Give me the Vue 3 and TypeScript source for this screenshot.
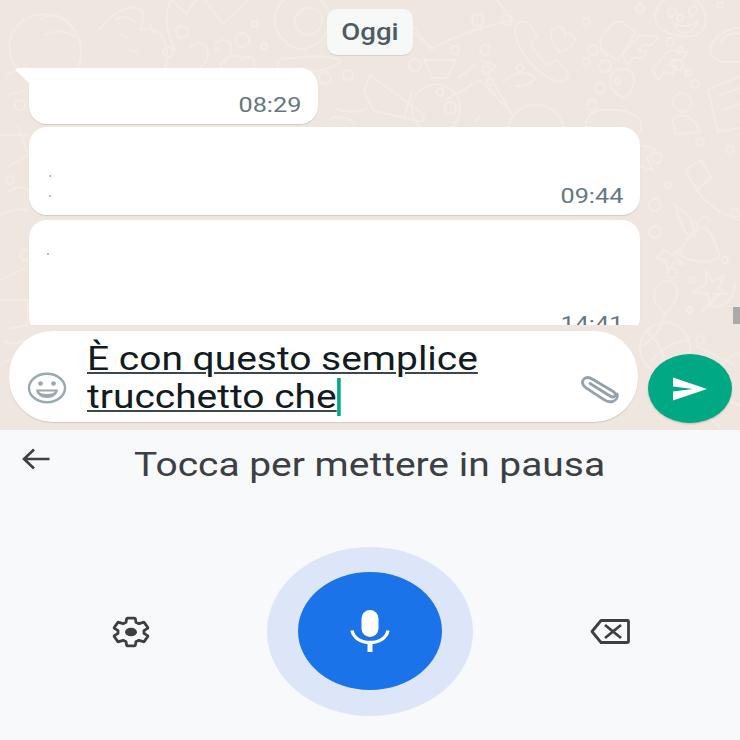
<template>
  <div class="phone">
    <section class="chat">
      <!-- wallpaper doodles -->
      <svg class="doodles" width="740" height="430" viewBox="0 0 740 430" fill="none">
        <circle v-for="(c, i) in dots" :key="i" :cx="c[0]" :cy="c[1]" :r="c[2]" />
        <path v-for="(d, i) in shapes" :key="'s' + i" :d="d" />
      </svg>

      <div class="messages">
        <div class="date-chip"><span class="wide">Oggi</span></div>
        <div class="bubble first">
          <span class="tail"></span>
          <span class="time">08:29</span>
        </div>
        <div class="bubble second">
          <i class="speck speck-a"></i>
          <i class="speck speck-b"></i>
          <span class="time">09:44</span>
        </div>
        <div class="bubble third">
          <i class="speck speck-c"></i>
          <span class="time">14:41</span>
        </div>
      </div>
      <div class="scroll-thumb"></div>

      <div class="composer">
        <div class="input-pill">
          <svg class="emoji" width="40" height="32" viewBox="0 0 40 32" fill="none">
            <ellipse cx="20" cy="16" rx="18" ry="14.2" stroke="#9aa8af" stroke-width="2.4" />
            <ellipse cx="13.5" cy="11.5" rx="2.4" ry="2.2" fill="#9aa8af" />
            <ellipse cx="26.5" cy="11.5" rx="2.4" ry="2.2" fill="#9aa8af" />
            <path d="M9 17.5h22c-.6 5.5-5 8.5-11 8.5S9.600 23 9 17.500z" fill="#9aa8af" />
            <path d="M12 19.500h16c-1 1.800-4 2.500-8 2.500s-7-.7-8-2.500z" fill="#fff" />
          </svg>
          <div class="draft">
            <span class="line">È con questo semplice</span>
            <span class="line"><span class="word">trucchetto che</span><i class="caret"></i></span>
          </div>
          <svg class="clip" width="40" height="30" viewBox="0 0 40 30" fill="none">
            <path d="M10 8.500 30 21c2 1.300 4 1.300 5-.2 1-1.500-.2-3.300-2.200-4.500L13 4.500C9 2 5.500 2 3.500 4.500 1.500 7 2.500 10.500 6 12.800l17.500 11.500c3 2 6.500 3 9.500 2 3.500-1.300 5-4.500 4-7.300" stroke="#93a1a9" stroke-width="2.800" stroke-linecap="round" stroke-linejoin="round" />
          </svg>
        </div>
        <button class="send">
          <svg width="36" height="26" viewBox="0 0 36 26"><path d="M1 1.500 35 13 1 24.500V15.500L21 13 1 10.500z" fill="#fff" /></svg>
        </button>
      </div>
    </section>

    <section class="keyboard">
      <div class="voice-header">
        <svg class="back" width="30" height="24" viewBox="0 0 30 24" fill="none">
          <path d="M28.500 12H3M13 2.500 3 12l10 9.500" stroke="#3c4043" stroke-width="2.600" />
        </svg>
        <span class="hint">Tocca per mettere in pausa</span>
      </div>
      <div class="voice-controls">
        <svg class="gear" width="38" height="32" viewBox="1.500 1 21 22" preserveAspectRatio="none" fill="none">
          <path d="M19.140 12.940c.04-.3.06-.61.06-.94 0-.32-.02-.64-.07-.94l2.030-1.580c.18-.14.23-.41.12-.61l-1.920-3.320c-.12-.22-.37-.29-.59-.22l-2.390.96c-.5-.38-1.030-.7-1.620-.94l-.36-2.540c-.04-.24-.24-.41-.48-.41h-3.840c-.24 0-.43.17-.47.41l-.36 2.540c-.59.24-1.130.57-1.620.94l-2.390-.96c-.22-.08-.47 0-.59.22L2.740 8.870c-.12.21-.08.47.12.61l2.030 1.580c-.05.3-.09.63-.09.94s.02.64.07.94l-2.030 1.580c-.18.14-.23.41-.12.61l1.920 3.320c.12.22.37.29.59.22l2.390-.96c.5.38 1.030.7 1.620.94l.36 2.540c.05.24.24.41.48.41h3.840c.24 0 .44-.17.47-.41l.36-2.540c.59-.24 1.130-.56 1.620-.94l2.390.96c.22.08.47 0 .59-.22l1.920-3.320c.12-.22.07-.47-.12-.61l-2.010-1.580z" stroke="#3c4043" stroke-width="2.800" stroke-linejoin="round" vector-effect="non-scaling-stroke" />
          <ellipse cx="12" cy="12" rx="3.300" ry="3" fill="#3c4043" />
        </svg>
        <div class="halo">
          <div class="mic-button">
            <svg width="40" height="44" viewBox="0 0 40 44" fill="none">
              <rect x="11.500" y="1" width="17" height="27" rx="8.500" fill="#fff" />
              <path d="M2 21.500c1.500 7.500 9 12 18 12s16.500-4.500 18-12" stroke="#fff" stroke-width="3.400" />
              <path d="M20 33v10" stroke="#fff" stroke-width="5" />
            </svg>
          </div>
        </div>
        <svg class="backspace" width="40" height="25" viewBox="0 0 40 25" fill="none">
          <path d="M11 1.500h26.500a1 1 0 0 1 1 1v20a1 1 0 0 1-1 1H11L2 12.500z" stroke="#3c4043" stroke-width="2.800" stroke-linejoin="round" />
          <path d="M15 6l16 13M31 6 15 19" stroke="#3c4043" stroke-width="2.800" />
        </svg>
      </div>
    </section>
  </div>
</template>

<script setup lang="ts">
// [x, y, r] of the little wallpaper circles
const dots: number[][] = [
  [182, 32, 6], [217, 50, 2], [242, 40, 7], [255, 24, 3], [264, 46, 3], [168, 52, 5],
  [507, 20, 5], [478, 20, 6], [485, 50, 5], [455, 50, 4], [486, 70, 4], [520, 68, 4],
  [490, 82, 3], [415, 65, 6], [450, 108, 6], [440, 92, 4], [593, 50, 5], [586, 22, 4],
  [586, 62, 4], [605, 66, 6], [618, 81, 3], [640, 8, 4], [680, 18, 3], [720, 5, 3],
  [670, 42, 4], [680, 50, 3], [678, 65, 5], [688, 73, 3], [695, 84, 4], [600, 88, 5],
  [592, 105, 5], [618, 143, 4], [657, 158, 5], [655, 205, 6], [700, 142, 4], [730, 150, 4],
  [668, 185, 3], [655, 232, 6], [700, 340, 4], [672, 273, 5], [693, 280, 3], [690, 310, 3],
  [325, 78, 6], [348, 75, 5], [20, 105, 5], [10, 180, 4], [25, 255, 5], [695, 225, 3],
  [735, 213, 4], [725, 260, 3]
]

const shapes: string[] = [
  // faces and blobs on the left
  'M10 40c5-25 40-35 60-15 20 20 10 55-10 60-25 5-55-15-50-45z',
  'M100 30c15-25 55-35 40 0 30-10 35 40 15 50-20 12-60 15-65-10',
  'M40 20c10-8 25-5 30 5M45 35c10-5 22-5 30 2',
  'M115 20c8-5 15-4 20 3M120 35l8 3M130 50l8 3M150 25l5 10',
  'M170 0c-5 15-5 30 5 50',
  // speech mark and heart
  'M190 48c8-8 20-4 18 8-2 8-8 14-14 14M215 45c6-8 16-6 16 4 0 8-6 14-12 15',
  'M222 62c8-8 18-8 20-2 5-6 14-3 12 6-2 7-10 13-18 15-8-4-18-12-14-19z',
  // top centre pencil box and plane
  'M172 0l14 14 10-14M205 0l18 24 25-24',
  'M280 60c25-5 50-5 60 0 3 6-30 15-55 12-8-1-10-8-5-12z',
  'M280 4c10-12 30-15 45 0 12 20 0 40-20 45-20 2-40-25-25-45z',
  'M300 12c8-8 22-4 22 8s-14 20-22 12-6-15 0-20z',
  'M430 50c25-15 60-25 82-30l-15-20M432 48l-25-20M400 10l30 38',
  // phone, heart
  'M530 25c-10-10-20 0-12 18 8 18 22 32 38 38 10 2 15-5 10-12l-10-9-7 5c-8-5-14-12-18-22l6-7z',
  'M552 30c5-6 14-2 13 5 6-4 12 2 9 8-4 6-10 8-15 9-4-6-11-14-7-22z',
  // film and letters
  'M600 40c6-12 15-20 22-18l14 10-18 28-16-8z',
  'M622 55l18-20 18 2-6 8-10 0-3 5 8 2-5 7-8-2-6 8z',
  'M652 70l18-20 18 2-6 8-10 0-3 5 8 2-5 7-8-2-6 8z',
  // heart-eyes emoji and donut
  'M655 15a25 25 0 1 1 50 10c-5 15-20 12-30 10-12-3-20-8-20-20z',
  'M668 10c3-4 9-2 8 2-1 3-4 5-6 5-2-2-3-4-2-7zM690 8c4-3 9 0 7 4l-6 5c-2-3-3-6-1-9zM675 24c8 3 16 2 22-2-2 8-8 12-13 11-4 0-8-4-9-9z',
  'M710 50c2-15 25-25 30-22M710 50c0 8 10 14 30 12M720 42c5-8 15-10 20-8',
  // plane left of bike, pencil
  'M424 60l32 0-10 18-14 0z',
  'M370 75l52 38c4 4 2 10-3 8l-45-10-10-20z M412 92l-8 25',
  // bicycle
  'M412 108a24 24 0 1 1 0 1z M508 132a28 28 0 1 1 0 1z',
  'M480 60l16 6-8 8 24 40M458 78l18-14M445 100l35-20 34 36M475 122l6-8M503 82c10-10 25-12 32-4-3 6-12 8-20 8',
  // people
  'M610 78a12 12 0 1 1 24 5c-2 8-4 12-10 14-8-2-14-8-14-19zM588 118c5-12 35-10 48-2 8 6 6 18-2 22l-40-2c-8-6-10-12-6-18z',
  'M673 102a9 9 0 1 1 18 0c0 6-4 10-9 10-5-1-9-5-9-10zM672 118c8-5 18-3 24 6l4 8-24 2z',
  // document
  'M708 90c10-6 25-10 32-14M708 90l10 42 22-4M718 96l22-8M722 110l18-6',
  // star and rocket lower right
  'M640 145l15 4-8 9 6 12-14-4-8 8 0-14-12-6 13-5z',
  'M685 170l16-10 10 18-14 12z M697 190c10 15 25 25 43 30M680 220l-5-15 15 12 5 20-10-5z',
  // bell, stars, pin, basketball
  'M680 255c5-15 12-25 25-28 10 10 12 22 15 30-12 6-28 6-40-2zM700 222a5 5 0 1 1 10 0',
  'M664 250l8 5 10-8-6 10 8 8-10-3-6 10-2-12-10-2z',
  'M706 270l6 12 12-6-6 12 10 6-14 0-3 14-3-14-14-2 12-8z',
  'M655 290c8-14 20-10 22 0 2 8-6 18-12 24-6-6-14-14-10-24z',
  'M640 350a25 25 0 1 0 50-4 25 25 0 1 0-50 4zM645 330c10 8 20 22 22 42M665 315c-4 15-15 28-25 32M690 340c-14 0-30 10-40 22',
  'M695 345l40 20M700 380l38-28M722 292l-20 20M735 282c0 20-15 30-28 22',
  'M695 400c10-4 30-4 45 6M660 418c25-10 50-5 60 10',
  // left margin bits
  'M8 95l18-5M0 135l28 0M18 125l10 30-20 12',
  'M0 280l26-12M0 300l28 0 0 25-20 4M0 365c8-8 20-8 26 0M4 340c6 5 14 5 20 0',
  'M0 215c10-5 25-8 28-3M6 75l20-8 6 18M8 192c8-6 16-6 22 0',
  'M330 120c5-6 20-4 25 5M335 108c10 5 25 5 32 0'
]
</script>

<style scoped>
.phone {
  width: 740px;
  height: 740px;
  overflow: hidden;
  display: flex;
  flex-direction: column;
  font-family: Roboto, "Noto Sans", sans-serif;
}

.chat {
  position: relative;
  height: 430px;
  background-color: #efe7df;
  display: flex;
  flex-direction: column;
  flex: none;
}

.doodles {
  position: absolute;
  left: 0;
  top: 0;
}

.doodles circle,
.doodles path {
  stroke: #f3ece5;
  stroke-width: 1.8;
}

.messages {
  position: relative;
  height: 325px;
  overflow: hidden;
  display: flex;
  flex-direction: column;
  padding: 9px 100px 0 29px;
  flex: none;
  width: 740px;
  box-sizing: border-box;
}

.date-chip {
  align-self: center;
  margin-left: 71px;
  width: 86px;
  height: 46px;
  border-radius: 10px;
  background-color: #f7f8f8;
  box-shadow: 0 1px 1px rgba(0, 0, 0, 0.1);
  color: #4f5b63;
  font-size: 23px;
  font-weight: 500;
  text-align: center;
  line-height: 47px;
  flex: none;
}

/* the whole screenshot is stretched sideways */
.wide {
  display: inline-block;
  transform: scaleX(1.2);
}

.bubble {
  position: relative;
  background-color: #fff;
  border-radius: 18px;
  box-shadow: 0 1px 1px rgba(0, 0, 0, 0.12);
  flex: none;
  width: 611px;
}

.first {
  width: 289px;
  height: 56px;
  margin-top: 13px;
  border-top-left-radius: 0;
}

.second {
  height: 88px;
  margin-top: 3px;
}

.third {
  height: 116px;
  margin-top: 5px;
}

.tail {
  position: absolute;
  left: -13px;
  top: 0;
  width: 14px;
  height: 16px;
  background-color: #fff;
  clip-path: polygon(0 0, 100% 0, 100% 100%, 0 15%);
  border-top-left-radius: 2px;
}

.time {
  position: absolute;
  right: 17px;
  bottom: 7px;
  color: #667781;
  font-size: 21px;
  line-height: 24px;
  transform: scaleX(1.2);
  transform-origin: right center;
}

.third .time {
  bottom: 0;
  top: 92px;
}

.speck {
  position: absolute;
  width: 2px;
  height: 2px;
  background-color: #b5bcc0;
}

.speck-a { left: 20px; top: 48px; }
.speck-b { left: 20px; top: 68px; }
.speck-c { left: 18px; top: 33px; }

.scroll-thumb {
  position: absolute;
  left: 733px;
  top: 307px;
  width: 7px;
  height: 17px;
  background-color: #a9aaa9;
}

.composer {
  display: flex;
  align-items: flex-end;
  gap: 10px;
  padding: 6px 8px 8px 9px;
  position: relative;
}

.input-pill {
  position: relative;
  width: 629px;
  height: 91px;
  background-color: #fff;
  border-radius: 44px;
  box-shadow: 0 1px 1px rgba(0, 0, 0, 0.14);
  display: flex;
  align-items: flex-end;
  box-sizing: border-box;
  padding: 0 18px 18px 18px;
  flex: none;
}

.emoji {
  flex: none;
  margin-right: 20px;
}

.draft {
  flex: 1;
  display: flex;
  flex-direction: column;
  align-self: flex-start;
  padding-top: 9px;
  color: #111b21;
  font-size: 33px;
  line-height: 38px;
  transform: scaleX(1.18);
  transform-origin: left center;
}

.line {
  display: flex;
  align-items: flex-start;
  height: 38px;
  white-space: nowrap;
}

.line:first-child,
.word {
  text-decoration: underline;
  text-decoration-thickness: 2px;
  text-underline-offset: 2px;
  text-decoration-color: #3c4850;
}

.caret {
  width: 3.4px;
  height: 38px;
  background-color: #00a884;
}

.clip {
  flex: none;
  margin-bottom: -1px;
}

.send {
  width: 84px;
  height: 69px;
  margin-bottom: -1px;
  border: none;
  padding: 0;
  border-radius: 50%;
  background-color: #00a884;
  box-shadow: 0 1px 2px rgba(0, 0, 0, 0.2);
  display: flex;
  align-items: center;
  justify-content: center;
  flex: none;
}

.keyboard {
  flex: 1;
  background-color: #f8f9fb;
  display: flex;
  flex-direction: column;
}

.voice-header {
  position: relative;
  height: 117px;
  display: flex;
  justify-content: center;
  flex: none;
}

.back {
  position: absolute;
  left: 21px;
  top: 17px;
}

.hint {
  margin-top: 15px;
  color: #3c4043;
  font-size: 33px;
  line-height: 40px;
  height: 40px;
  transform: scaleX(1.18);
}

.voice-controls {
  display: flex;
  align-items: center;
  justify-content: center;
  height: 169px;
  padding-left: 2px;
  flex: none;
}

.gear {
  margin-right: 117px;
}

.halo {
  width: 206px;
  height: 169px;
  box-sizing: border-box;
  padding-bottom: 2px;
  border-radius: 50%;
  background-color: #dce6f8;
  display: flex;
  align-items: center;
  justify-content: center;
  flex: none;
}

.mic-button {
  width: 144px;
  height: 118px;
  border-radius: 50%;
  background-color: #1a73e8;
  display: flex;
  align-items: center;
  justify-content: center;
}

.backspace {
  margin-left: 117px;
}
</style>

<style>
html,
body {
  margin: 0;
  background: #f8f9fb;
}
</style>
